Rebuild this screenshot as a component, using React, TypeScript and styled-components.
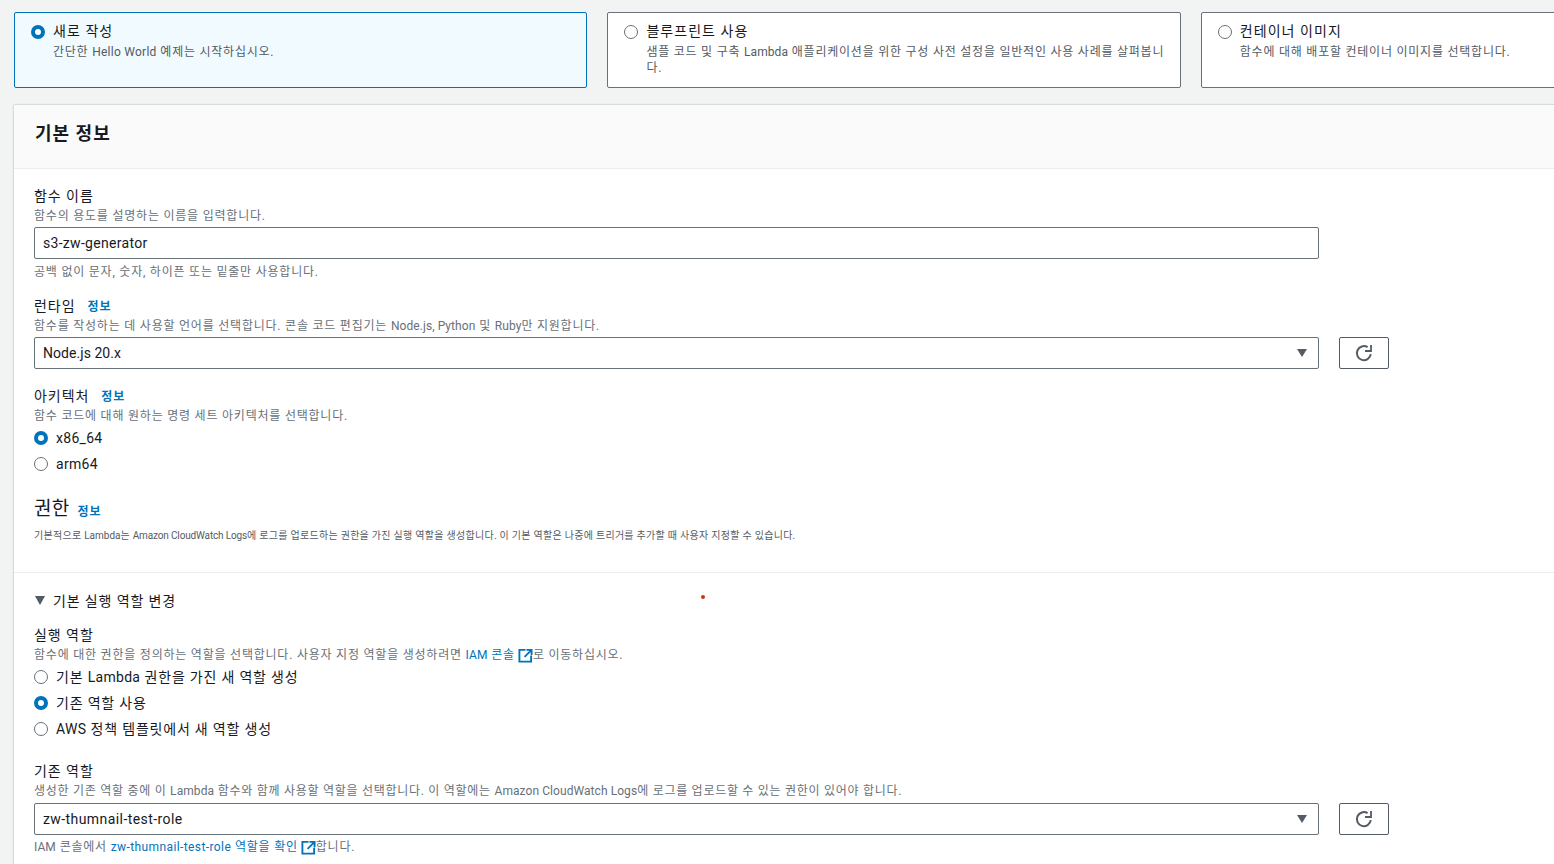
import React from "react";
import styled, { createGlobalStyle } from "styled-components";

const Global = createGlobalStyle`
  html, body { margin: 0; padding: 0; background: #f2f3f3; overflow: hidden; }
  body { font-family: Roboto, "Noto Sans CJK KR", "Noto Sans", sans-serif; color: #16191f; }
  * { box-sizing: border-box; }
`;
const Page = styled.div`
  position: relative; width: 1554px; height: 864px; overflow: hidden; padding: 12px 0 0 14px;
`;
const Cards = styled.div`
  display: grid; grid-template-columns: repeat(3, 573.4px); gap: 20px; width: 1800px;
`;
const Card = styled.div<{ $on?: boolean }>`
  height: 76px; display: flex; gap: 8px; padding: 10px 14px 0 16px; border-radius: 2px;
  border: 1px solid ${(p) => (p.$on ? "#0073bb" : "#687078")};
  background: ${(p) => (p.$on ? "#f1faff" : "#fff")};
`;
const CardText = styled.div`flex: 1; min-width: 0;`;
const CardTitle = styled.div`font-size: 14px; line-height: 17px; letter-spacing: 1.05px;`;
const CardDesc = styled.div`
  margin-top: 4px; font-size: 12px; line-height: 16px; color: #545b64; white-space: nowrap; letter-spacing: 0.77px;
`;
const Lat = styled.span<{ $ls?: number }>`letter-spacing: ${(p) => p.$ls ?? 0.07}px;`;
const Circle = styled.span<{ $on?: boolean }>`
  flex: none; width: 14px; height: 14px; border-radius: 50%; margin-top: 2px; background: #fff;
  border: ${(p) => (p.$on ? "4px solid #0073bb" : "1.5px solid #687078")};
`;
const Panel = styled.section`
  margin-top: 17px; width: 1600px; height: 780px; background: #fff;
  box-shadow: 0 0 2px rgba(0, 28, 36, 0.35);
`;
const PanelHead = styled.header`
  height: 64px; padding: 16px 21px 0; background: #fafafa; border-bottom: 1px solid #eaeded;
`;
const H2 = styled.h2`margin: 0; font-size: 18px; line-height: 26px; font-weight: 700; letter-spacing: 1px;`;
const Section = styled.div<{ $top: number }>`padding: ${(p) => p.$top}px 20px 0;`;
const Field = styled.div<{ $top?: number }>`margin-top: ${(p) => p.$top ?? 0}px;`;
const LabelRow = styled.div`display: flex; align-items: center; gap: 12px; height: 20px;`;
const Label = styled.div`font-size: 14px; line-height: 20px; letter-spacing: 0.95px;`;
const Info = styled.a`font-size: 12px; line-height: 16px; font-weight: 700; color: #0073bb; margin-top: 1px; letter-spacing: 0.9px;`;
const PermInfo = styled(Info)`margin-top: 5px;`;
const Hint = styled.div<{ $top?: number; $ls?: number }>`
  margin-top: ${(p) => p.$top ?? 1}px; font-size: 12px; line-height: 18px; color: #687078;
  letter-spacing: ${(p) => p.$ls ?? 0.78}px; white-space: nowrap;
`;
const Link = styled.a`color: #0073bb;`;
const Ext = styled.svg`width: 15px; height: 15px; vertical-align: -3.5px; margin-left: 3px; color: #0073bb;`;
const Row = styled.div<{ $top?: number }>`display: flex; gap: 20px; margin-top: ${(p) => p.$top ?? 2}px;`;
const Control = styled.div<{ $ls?: number }>`
  position: relative; width: 1285px; height: 32px; display: flex; align-items: center; padding: 0 8px;
  border: 1px solid #687078; border-radius: 2px; background: #fff; font-size: 14px;
  letter-spacing: ${(p) => p.$ls ?? 0.3}px;
`;
const Caret = styled.span`
  position: absolute; right: 11px; top: 11px; width: 0; height: 0;
  border-left: 5.5px solid transparent; border-right: 5.5px solid transparent; border-top: 8px solid #545b64;
`;
const Refresh = styled.button`
  width: 50px; height: 32px; display: flex; align-items: center; justify-content: center; padding: 0;
  border: 1px solid #545b64; border-radius: 2px; background: #fff; color: #545b64;
`;
const RadioList = styled.div`margin-top: 3px; display: flex; flex-direction: column; gap: 6px;`;
const RadioRow = styled.div`display: flex; align-items: center; gap: 8px; height: 20px; font-size: 14px; line-height: 20px; letter-spacing: 0.8px;`;
const RadioDot = styled(Circle)`margin-top: 0;`;
const PermTitle = styled.div`display: flex; align-items: center; gap: 8px; margin-top: 22px; height: 26px;`;
const H3 = styled.div`font-size: 19px; line-height: 26px; letter-spacing: 0.3px;`;
const Small = styled.div`margin-top: 6px; font-size: 10px; line-height: 16px; color: #545b64; white-space: nowrap; letter-spacing: 0.28px;`;
const Divider = styled.div`margin-top: 28px; border-top: 1px solid #eaeded;`;
const Expand = styled.div`display: flex; align-items: center; gap: 8px; margin-top: 1px; height: 20px; font-size: 14px; letter-spacing: 0.87px; color: #16191f;`;
const Tri = styled.span`
  width: 0; height: 0; margin-left: 1px; border-left: 5.5px solid transparent; border-right: 5.5px solid transparent; border-top: 9px solid #545b64;
`;
const Dot = styled.span`
  position: absolute; left: 701px; top: 595px; width: 4px; height: 4px; border-radius: 50%; background: #d13212;
`;

const ExtIcon = () => (
  <Ext viewBox="0 0 16 16" fill="none" stroke="currentColor" strokeWidth="2">
    <path d="M8 2H1.5v12.5H14V8" />
    <path d="M9 2h5.5v5.5M14 2.5 7 9.5" />
  </Ext>
);
const RefreshIcon = () => (
  <svg width="18" height="18" viewBox="0 0 18 18" fill="none" stroke="currentColor" strokeWidth="2">
    <path d="M15.8 10.2A7 7 0 1 1 12.6 3.2" />
    <path d="M16 1v6h-6" strokeWidth="1.8" />
  </svg>
);
const Radio = ({ on, children }: { on?: boolean; children: React.ReactNode }) => (
  <RadioRow>
    <RadioDot $on={on} />
    <span>{children}</span>
  </RadioRow>
);
const SelectRow = ({ value, ls, top }: { value: string; ls?: number; top?: number }) => (
  <Row $top={top}>
    <Control $ls={ls}>
      {value}
      <Caret />
    </Control>
    <Refresh aria-label="refresh">
      <RefreshIcon />
    </Refresh>
  </Row>
);

export default function App() {
  return (
    <Page>
      <Global />
      <Cards>
        <Card $on>
          <Circle $on />
          <CardText>
            <CardTitle>새로 작성</CardTitle>
            <CardDesc>간단한 <Lat $ls={0.25}>Hello World</Lat> 예제는 시작하십시오.</CardDesc>
          </CardText>
        </Card>
        <Card>
          <Circle />
          <CardText>
            <CardTitle>블루프린트 사용</CardTitle>
            <CardDesc>
              샘플 코드 및 구축 <Lat>Lambda</Lat> 애플리케이션을 위한 구성 사전 설정을 일반적인 사용 사례를 살펴봅니
              <br />
              다.
            </CardDesc>
          </CardText>
        </Card>
        <Card>
          <Circle />
          <CardText>
            <CardTitle>컨테이너 이미지</CardTitle>
            <CardDesc>함수에 대해 배포할 컨테이너 이미지를 선택합니다.</CardDesc>
          </CardText>
        </Card>
      </Cards>
      <Panel>
        <PanelHead>
          <H2>기본 정보</H2>
        </PanelHead>
        <Section $top={17}>
          <Field>
            <Label>함수 이름</Label>
            <Hint>함수의 용도를 설명하는 이름을 입력합니다.</Hint>
            <Row>
              <Control>s3-zw-generator</Control>
            </Row>
            <Hint $top={4}>공백 없이 문자, 숫자, 하이픈 또는 밑줄만 사용합니다.</Hint>
          </Field>
          <Field $top={15}>
            <LabelRow>
              <Label>런타임</Label>
              <Info>정보</Info>
            </LabelRow>
            <Hint>함수를 작성하는 데 사용할 언어를 선택합니다. 콘솔 코드 편집기는 <Lat>Node.js, Python</Lat> 및 <Lat>Ruby</Lat>만 지원합니다.</Hint>
            <SelectRow value="Node.js 20.x" ls={0.05} />
          </Field>
          <Field $top={17}>
            <LabelRow>
              <Label>아키텍처</Label>
              <Info>정보</Info>
            </LabelRow>
            <Hint>함수 코드에 대해 원하는 명령 세트 아키텍처를 선택합니다.</Hint>
            <RadioList>
              <Radio on><Lat $ls={0.3}>x86_64</Lat></Radio>
              <Radio><Lat $ls={0.3}>arm64</Lat></Radio>
            </RadioList>
          </Field>
          <PermTitle>
            <H3>권한</H3>
            <PermInfo>정보</PermInfo>
          </PermTitle>
          <Small>
            기본적으로 <Lat $ls={0}>Lambda</Lat>는 <Lat $ls={-0.15}>Amazon CloudWatch Logs</Lat>에 로그를 업로드하는 권한을 가진 실행 역할을 생성합니다. 이 기본 역할은 나중에 트리거를 추가할 때 사용자 지정할 수 있습니다.
          </Small>
        </Section>
        <Divider />
        <Section $top={16}>
          <Expand>
            <Tri />
            기본 실행 역할 변경
          </Expand>
          <Field $top={15}>
            <Label>실행 역할</Label>
            <Hint>
              함수에 대한 권한을 정의하는 역할을 선택합니다. 사용자 지정 역할을 생성하려면 <Link><Lat>IAM</Lat> 콘솔<ExtIcon /></Link>로 이동하십시오.
            </Hint>
            <RadioList>
              <Radio>기본 <Lat $ls={0.3}>Lambda</Lat> 권한을 가진 새 역할 생성</Radio>
              <Radio on>기존 역할 사용</Radio>
              <Radio><Lat $ls={0.3}>AWS</Lat> 정책 템플릿에서 새 역할 생성</Radio>
            </RadioList>
          </Field>
          <Field $top={22}>
            <Label>기존 역할</Label>
            <Hint $ls={0.72}>생성한 기존 역할 중에 이 <Lat>Lambda</Lat> 함수와 함께 사용할 역할을 선택합니다. 이 역할에는 <Lat>Amazon CloudWatch Logs</Lat>에 로그를 업로드할 수 있는 권한이 있어야 합니다.</Hint>
            <SelectRow value="zw-thumnail-test-role" ls={0.42} top={3} />
            <Hint $top={3}>
              <Lat>IAM</Lat> 콘솔에서 <Link><Lat $ls={0.4}>zw-thumnail-test-role</Lat> 역할을 확인<ExtIcon /></Link>합니다.
            </Hint>
          </Field>
        </Section>
      </Panel>
      <Dot />
    </Page>
  );
}
